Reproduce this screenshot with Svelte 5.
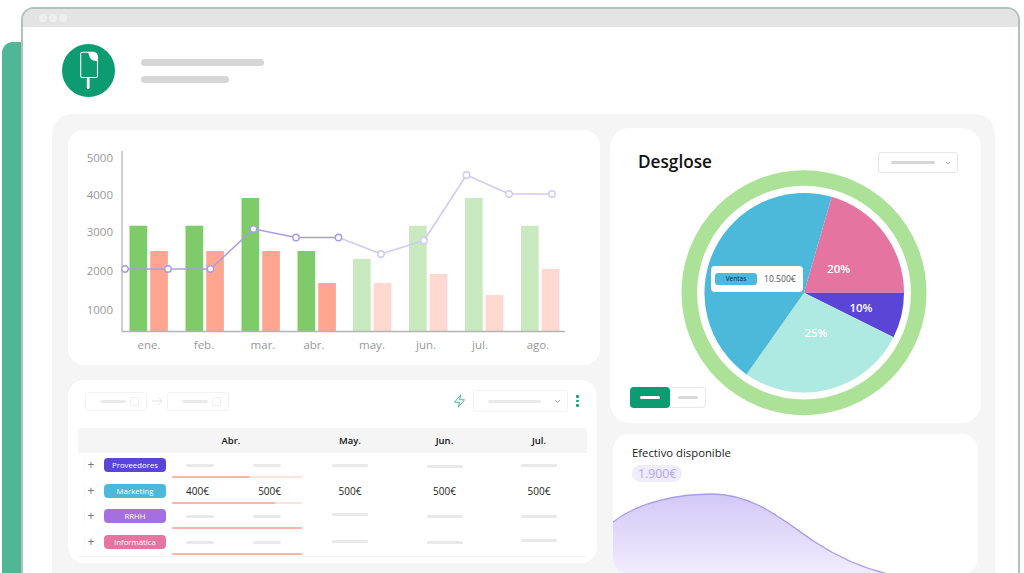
<script>
	// chart data, in page pixels (the svg viewBox matches the card position)
	const baseY = 331;
	const bars = [
		{ x: 129.5, g: 225.7, r: 251, label: 'ene.', lx: 149 },
		{ x: 185.5, g: 225.7, r: 251, label: 'feb.', lx: 204 },
		{ x: 241.5, g: 198, r: 251, label: 'mar.', lx: 263 },
		{ x: 297.5, g: 251, r: 283, label: 'abr.', lx: 314 },
		{ x: 353, g: 259, r: 283, label: 'may.', lx: 372, faded: true },
		{ x: 409, g: 225.7, r: 274, label: 'jun.', lx: 426, faded: true },
		{ x: 465, g: 198, r: 295, label: 'jul.', lx: 480, faded: true },
		{ x: 521, g: 225.7, r: 269, label: 'ago.', lx: 538, faded: true }
	];
	const ticks = [
		{ v: 5000, y: 162 },
		{ v: 4000, y: 199 },
		{ v: 3000, y: 236 },
		{ v: 2000, y: 275 },
		{ v: 1000, y: 314 }
	];
	const points = [
		[125, 269], [168, 269], [210.5, 269], [253.5, 229], [296, 237.5], [338.5, 237.5],
		[381, 254], [424, 240.5], [466.5, 175], [509, 194], [552, 194]
	];
	const toLine = (pts) => pts.map((p) => p.join(',')).join(' ');

	const rows = [
		{ name: 'Proveedores', color: '#5a45d6', fill: 60, offs: [0, 0, 1, 0] },
		{ name: 'Marketing', color: '#4cb9da', fill: 79, values: true },
		{ name: 'RRHH', color: '#a66fe0', fill: 100, offs: [0, -2, 0, 0] },
		{ name: 'Informática', color: '#e674a1', fill: 100, offs: [0, -1, 0, -2] }
	];
</script>

<div class="page">
	<div class="backstrip"></div>
	<div class="window">
		<div class="titlebar">
			<span class="dot"></span><span class="dot"></span><span class="dot"></span>
		</div>

		<header class="head">
			<div class="logo">
				<svg width="53" height="53" viewBox="0 0 53 53">
					<path d="M18.7 9.8 Q18.7 8.3 20.2 8.3 H31 Q35.5 8.8 35.5 13 V32 Q35.5 33.5 34 33.5 H20.2 Q18.7 33.5 18.7 32 Z" fill="none" stroke="#fff" stroke-width="1.1" />
					<path d="M26 8.3 H31 Q35.5 8.8 35.5 13 V17 Q30 17.2 28 14 Q27 11 26 8.3 Z" fill="#fff" />
					<rect x="24.8" y="33.5" width="2.8" height="11.5" rx="1.3" fill="#fff" />
				</svg>
			</div>
			<div class="head-lines">
				<span class="ph-a"></span>
				<span class="ph-b"></span>
			</div>
		</header>

		<main class="panel">
			<div class="col-left">
				<section class="card chart">
					<svg width="532" height="235" viewBox="68 130 532 235">
						{#each ticks as t}
							<text class="tick" x="113" y={t.y} text-anchor="end">{t.v}</text>
						{/each}
						{#each bars as b}
							<rect x={b.x} y={b.g} width="17.7" height={baseY - b.g} fill={b.faded ? '#c9eabf' : '#7fcb69'} />
							<rect x={b.x + 20.7} y={b.r} width="17.7" height={baseY - b.r} fill={b.faded ? '#ffd8d1' : '#ffa590'} />
							<text class="tick" x={b.lx} y="349" text-anchor="middle">{b.label}</text>
						{/each}
						<path d="M122 151 V331.5 H565" fill="none" stroke="#b4b4b4" stroke-width="1.3" />
						<polyline points={toLine(points.slice(5))} fill="none" stroke="#cfc9f5" stroke-width="1.5" />
						<polyline points={toLine(points.slice(0, 6))} fill="none" stroke="#a99ceb" stroke-width="1.5" />
						{#each points as p, i}
							<circle cx={p[0]} cy={p[1]} r="3.2" fill="#fff" stroke={i < 6 ? '#a99ceb' : '#cfc9f5'} stroke-width="1.4" />
						{/each}
					</svg>
				</section>

				<section class="card table">
					<div class="tools">
						<div class="date"><span class="ph"></span><span class="cal"></span></div>
						<svg class="arrow" width="12" height="10" viewBox="0 0 12 10">
							<path d="M1 5 H11 M7.5 1.5 L11 5 L7.5 8.5" fill="none" stroke="#e2e2e2" stroke-width="1" />
						</svg>
						<div class="date"><span class="ph"></span><span class="cal"></span></div>
						<svg class="bolt" width="15" height="16" viewBox="0 0 24 24">
							<path d="M14 2 4 14h8l-2 8 10-12h-8l2-8z" fill="none" stroke="#4fb795" stroke-width="1.6" stroke-linejoin="round" />
						</svg>
						<div class="pick">
							<span class="ph wide"></span>
							<svg width="7" height="5" viewBox="0 0 7 5"><path d="M1 1 L3.5 3.5 L6 1" fill="none" stroke="#999" stroke-width="0.9" /></svg>
						</div>
						<div class="kebab"><i></i><i></i><i></i></div>
					</div>

					<div class="grid thead">
						<span></span>
						<span class="abr">Abr.</span>
						<span>May.</span>
						<span>Jun.</span>
						<span>Jul.</span>
					</div>

					{#each rows as row}
						<div class="grid trow">
							<div class="who">
								<span class="plus">+</span>
								<span class="tag" style="background:{row.color}">{row.name}</span>
							</div>
							<div class="abr-cell">
								<div class="pair">
									{#if row.values}
										<span class="val">400€</span><span class="val">500€</span>
									{:else}
										<span class="ph cell-s"></span><span class="ph cell-s"></span>
									{/if}
								</div>
								<div class="progress"><div style="width:{row.fill}%"></div></div>
							</div>
							{#each [1, 2, 3] as c}
								<div class="cell">
									{#if row.values}
										<span class="val">500€</span>
									{:else}
										<span class="ph cell-m" style="transform:translateY({row.offs[c]}px)"></span>
									{/if}
								</div>
							{/each}
						</div>
					{/each}
				</section>
			</div>

			<div class="col-right">
				<section class="card pie">
					<svg class="pie-svg" width="371" height="295" viewBox="610 128 371 295">
						<circle cx="804" cy="292.7" r="114.7" fill="none" stroke="#abe297" stroke-width="15.6" />
						<path d="M804 292.7 L831.7 196.7 A100 100 0 0 1 904 292.7 Z" fill="#e674a1" />
						<path d="M804 292.7 L904 292.7 A100 100 0 0 1 893.5 337.2 Z" fill="#5a45d6" />
						<path d="M804 292.7 L893.5 337.2 A100 100 0 0 1 746.5 374.4 Z" fill="#aeeae2" />
						<path d="M804 292.7 L746.5 374.4 A100 100 0 0 1 831.7 196.7 Z" fill="#4cb9da" />
						<text class="pct" x="838.7" y="272.5" text-anchor="middle">20%</text>
						<text class="pct" x="861" y="311.5" text-anchor="middle">10%</text>
						<text class="pct" x="816" y="336.5" text-anchor="middle">25%</text>
					</svg>
					<div class="pie-head">
						<h2>Desglose</h2>
						<div class="pick small">
							<span class="ph wide"></span>
							<svg width="6" height="4" viewBox="0 0 7 5"><path d="M1 1 L3.5 3.5 L6 1" fill="none" stroke="#888" stroke-width="1" /></svg>
						</div>
					</div>
					<div class="tooltip">
						<span class="tip-tag">Ventas</span>
						<span class="tip-val">10.500€</span>
					</div>
					<div class="toggle">
						<span class="on"><i></i></span>
						<span class="off"><i></i></span>
					</div>
				</section>

				<section class="card cash">
					<h3>Efectivo disponible</h3>
					<span class="amount">1.900€</span>
					<svg class="area" width="365" height="90" viewBox="613 490 365 90">
						<defs>
							<linearGradient id="fade" x1="0" y1="0" x2="0" y2="1">
								<stop offset="0" stop-color="#d3c8f7" />
								<stop offset="1" stop-color="#f3effd" />
							</linearGradient>
						</defs>
						<path d="M613 522 C640 501 680 494 712 494 C755 494 785 522 815 542 C838 557 862 568 888 574 V580 H613 Z" fill="url(#fade)" />
						<path d="M613 522 C640 501 680 494 712 494 C755 494 785 522 815 542 C838 557 862 568 888 574" fill="none" stroke="#a99ceb" stroke-width="1.3" />
					</svg>
				</section>
			</div>
		</main>
	</div>
</div>

<style>
	:global(body) {
		margin: 0;
		background: #fff;
	}

	.page {
		display: flex;
		height: 573px;
		padding: 7px 4px 0 2px;
		box-sizing: border-box;
		overflow: hidden;
		font-family: 'Open Sans', 'Noto Sans', sans-serif;
		color: #1c1c1c;
	}

	.backstrip {
		width: 19px;
		margin-top: 35px;
		flex: none;
		background: #4fb795;
		border-radius: 11px 0 0 0;
	}

	.window {
		flex: 1;
		min-width: 0;
		border: 2px solid #adc3bb;
		border-bottom: none;
		border-radius: 13px 13px 0 0;
		background: #fff;
		overflow: hidden;
	}

	.titlebar {
		display: flex;
		align-items: center;
		gap: 2px;
		height: 18px;
		padding-left: 16px;
		background: #e4e4e4;
	}
	.dot {
		width: 8px;
		height: 8px;
		border-radius: 50%;
		background: #efefef;
	}

	.head {
		display: flex;
		align-items: center;
		gap: 26px;
		height: 87px;
		padding-left: 39px;
		box-sizing: border-box;
	}
	.logo {
		width: 53px;
		height: 53px;
		border-radius: 50%;
		background: #0d9c72;
		flex: none;
	}
	.logo svg {
		display: block;
	}
	.head-lines {
		display: flex;
		flex-direction: column;
		gap: 10px;
	}
	.head-lines span {
		display: block;
		height: 7px;
		border-radius: 4px;
		background: #d6d6d6;
	}
	.ph-a {
		width: 123px;
	}
	.ph-b {
		width: 88px;
	}

	.panel {
		display: flex;
		gap: 10px;
		margin: 0 23px 0 29px;
		padding: 14px 14px 0 16px;
		height: 470px;
		background: #f5f5f5;
		border-radius: 20px 20px 0 0;
	}
	.col-left {
		width: 532px;
		flex: none;
		padding-top: 2px;
		display: flex;
		flex-direction: column;
		gap: 15px;
	}
	.col-right {
		width: 371px;
		flex: none;
		display: flex;
		flex-direction: column;
		gap: 11px;
	}
	.card {
		background: #fff;
		border-radius: 16px;
	}

	.chart {
		height: 235px;
	}
	.chart svg {
		display: block;
	}
	.tick {
		font-size: 11.5px;
		fill: #999;
	}

	.table {
		width: 529px;
		height: 183px;
		padding: 10px 10px 0;
		box-sizing: border-box;
	}
	.tools {
		display: flex;
		align-items: center;
		height: 22px;
		padding: 0 6px 0 7px;
		margin-bottom: 16px;
	}
	.date {
		display: flex;
		align-items: center;
		justify-content: space-between;
		width: 62px;
		height: 19px;
		padding: 0 7px 0 14px;
		box-sizing: border-box;
		border: 1px solid #f3f3f3;
		border-radius: 3px;
	}
	.cal {
		width: 7px;
		height: 7px;
		border: 1px solid #eeeeee;
		border-radius: 2px;
	}
	.arrow {
		margin: 0 4px 0 4px;
	}
	.ph {
		display: block;
		height: 3px;
		width: 26px;
		border-radius: 2px;
		background: #ebebeb;
	}
	.bolt {
		margin-left: auto;
		margin-right: 6px;
	}
	.pick {
		display: flex;
		align-items: center;
		justify-content: space-between;
		width: 95px;
		height: 22px;
		padding: 0 6px 0 14px;
		box-sizing: border-box;
		border: 1px solid #f2f2f2;
		border-radius: 3px;
	}
	.ph.wide {
		width: 53px;
	}
	.kebab {
		display: flex;
		flex-direction: column;
		gap: 1.7px;
		margin-left: 8px;
		margin-right: 2px;
	}
	.kebab i {
		width: 2.6px;
		height: 2.6px;
		border-radius: 50%;
		background: #0d9c72;
	}

	.grid {
		display: grid;
		grid-template-columns: 94px 130px 96px 93px 96px;
	}
	.thead {
		height: 25px;
		align-items: center;
		text-align: center;
		background: #f5f5f5;
		font-size: 9.5px;
		font-weight: 600;
		color: #111;
		border-radius: 3px 3px 0 0;
	}
	.thead .abr {
		padding-right: 12px;
	}
	.trow {
		height: 25.7px;
		box-sizing: border-box;
		padding-top: 5px;
	}
	.trow:last-child {
		border-bottom: 1px solid #f4f4f4;
		height: 27px;
	}
	.who {
		display: flex;
		align-items: flex-start;
		gap: 7px;
		padding-left: 7px;
	}
	.plus {
		width: 12px;
		height: 14px;
		line-height: 13px;
		text-align: center;
		font-size: 12px;
		color: #777;
		box-shadow: -1px 0 0 #f6f6f6;
	}
	.tag {
		width: 62px;
		height: 14px;
		line-height: 14px;
		border-radius: 4px;
		text-align: center;
		font-size: 7.8px;
		color: #fff;
	}
	.abr-cell {
		display: flex;
		flex-direction: column;
		height: 20px;
		justify-content: space-between;
	}
	.pair {
		display: flex;
		justify-content: space-between;
		height: 14px;
		align-items: center;
		padding: 0 21px 0 14px;
	}
	.progress {
		height: 2px;
		background: #fde3dc;
		border-radius: 1px;
	}
	.progress div {
		height: 100%;
		background: #f9b5a5;
		border-radius: 1px;
	}
	.cell {
		display: flex;
		justify-content: center;
		align-items: center;
		height: 14px;
	}
	.val {
		font-size: 10px;
		color: #222;
	}
	.ph.cell-s {
		width: 28px;
		background: #e9e9e9;
	}
	.ph.cell-m {
		width: 36px;
		background: #e9e9e9;
	}

	.pie {
		position: relative;
		height: 295px;
		display: grid;
		border-radius: 20px;
	}
	.pie-svg {
		grid-area: 1 / 1;
		display: block;
	}
	.pie-head {
		grid-area: 1 / 1;
		align-self: start;
		display: flex;
		align-items: center;
		justify-content: space-between;
		padding: 23px 23px 0 28px;
	}
	.pie-head h2 {
		margin: 0 0 2px;
		font-size: 17.2px;
		font-weight: 600;
		color: #111;
		line-height: 21px;
	}
	.pick.small {
		width: 80px;
		height: 21px;
		padding: 0 6px 0 12px;
		border-color: #e6e6e6;
	}
	.pick.small .ph {
		width: 44px;
		background: #d6d6d6;
	}
	.pct {
		font-family: 'Open Sans', sans-serif;
		font-size: 11.5px;
		font-weight: 600;
		fill: #fff;
	}
	.tooltip {
		position: absolute;
		left: 101px;
		top: 138px;
		width: 92px;
		height: 26px;
		display: flex;
		align-items: center;
		gap: 7px;
		padding-left: 4px;
		box-sizing: border-box;
		background: #fff;
		border-radius: 4px;
	}
	.tip-tag {
		width: 42px;
		height: 12px;
		line-height: 12px;
		border-radius: 3px;
		background: #4cb9da;
		text-align: center;
		font-size: 6.5px;
		color: #123;
	}
	.tip-val {
		font-size: 8.6px;
		color: #555;
	}
	.toggle {
		grid-area: 1 / 1;
		align-self: end;
		justify-self: start;
		display: flex;
		margin: 0 0 15px 20px;
		height: 21px;
		width: 76px;
		border-radius: 4px;
		box-shadow: inset 0 0 0 1px #e8e8e8;
	}
	.toggle span {
		display: flex;
		align-items: center;
		justify-content: center;
		height: 100%;
	}
	.toggle i {
		display: block;
		width: 20px;
		height: 3px;
		border-radius: 1.5px;
	}
	.toggle .on {
		width: 40px;
		background: #0d9c72;
		border-radius: 4px;
	}
	.toggle .on i {
		background: #fff;
	}
	.toggle .off {
		width: 36px;
	}
	.toggle .off i {
		background: #d8d8d8;
	}

	.cash {
		position: relative;
		margin: 0 3px;
		height: 140px;
		padding: 11px 19px 0;
		box-sizing: border-box;
		overflow: hidden;
	}
	.cash h3 {
		margin: 0;
		font-size: 11.3px;
		font-weight: 400;
		line-height: 16px;
		color: #222;
	}
	.amount {
		display: inline-block;
		height: 17px;
		line-height: 17px;
		padding: 0 6px;
		border-radius: 8.5px;
		background: #efecfb;
		font-size: 12.3px;
		color: #b3a6f0;
	}
	.area {
		position: absolute;
		left: 0;
		top: 56px;
		display: block;
	}
</style>
